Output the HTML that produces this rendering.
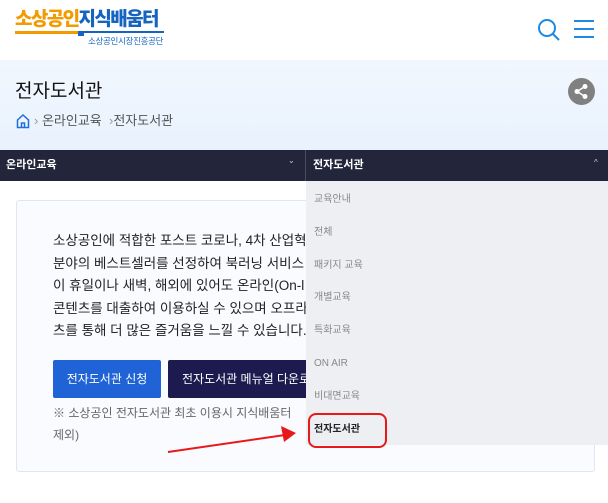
<!DOCTYPE html>
<html><head><meta charset="utf-8"><style>
*{margin:0;padding:0;box-sizing:border-box}
body{width:608px;height:503px;overflow:hidden;background:#fff;font-family:"Liberation Sans","Noto Sans CJK KR",sans-serif;position:relative}
.a{position:absolute}
</style></head><body>
<div class="a" style="left:15px;top:9px;font-size:19px;font-weight:900;letter-spacing:-1.6px;line-height:22px"><span style="color:#f39a00">소상공인</span><span style="color:#1565c0">지식배움터</span></div>
<div class="a" style="left:15px;top:31px;width:66px;height:3px;background:#f39a00"></div>
<div class="a" style="left:80px;top:31px;width:84px;height:2px;background:#1565c0"></div>
<div class="a" style="left:78px;top:31px;width:6px;height:5px;background:#1565c0"></div>
<div class="a" style="left:88px;top:36px;font-size:8.5px;color:#1565c0;line-height:11px;letter-spacing:-0.3px">소상공인시장진흥공단</div>
<svg class="a" style="left:537px;top:18px" width="24" height="24"><circle cx="10" cy="10" r="8" fill="none" stroke="#1e88e5" stroke-width="2"/><line x1="16" y1="16" x2="22" y2="22" stroke="#1e88e5" stroke-width="2"/></svg>
<svg class="a" style="left:573px;top:19px" width="22" height="20"><path d="M1 2H21M1 10H21M1 18H21" stroke="#1e88e5" stroke-width="2"/></svg>
<div class="a" style="left:0;top:60px;width:608px;height:90px;background:linear-gradient(#f1f7fe,#e9f2fd)"></div>
<div class="a" style="left:15px;top:80px;font-size:19px;color:#111;line-height:24px">전자도서관</div>
<div class="a" style="left:568px;top:78px;width:27px;height:27px;border-radius:50%;background:#808080"></div>
<svg class="a" style="left:568px;top:78px" width="27" height="27"><circle cx="17" cy="8.5" r="2.5" fill="#fff"/><circle cx="9" cy="13.5" r="2.5" fill="#fff"/><circle cx="17" cy="18.5" r="2.5" fill="#fff"/><path d="M17 8.5L9 13.5L17 18.5" stroke="#fff" stroke-width="1.5" fill="none"/></svg>
<svg class="a" style="left:16px;top:113px" width="14" height="16"><path d="M1.5 7L7 2L12.5 7V14.5H1.5Z M5.5 14.5V10H8.5V14.5" fill="none" stroke="#1e6fd9" stroke-width="1.5"/></svg>
<div class="a" style="left:34px;top:112px;font-size:13px;color:#555;line-height:18px"><span style="color:#999">›</span> 온라인교육 &nbsp;<span style="color:#999">›</span>전자도서관</div>
<div class="a" style="left:0;top:150px;width:608px;height:31px;background:#23263a"></div>
<div class="a" style="left:305px;top:150px;width:1px;height:31px;background:#4a4d60"></div>
<div class="a" style="left:6px;top:157px;font-size:11px;color:#fff;font-weight:bold;line-height:16px">온라인교육</div>
<div class="a" style="left:288px;top:156px;font-size:8px;color:#ccc">⌄</div>
<div class="a" style="left:313px;top:157px;font-size:11px;color:#fff;font-weight:bold;line-height:16px">전자도서관</div>
<div class="a" style="left:594px;top:158px;font-size:8px;color:#ccc">^</div>
<div class="a" style="left:16px;top:200px;width:579px;height:272px;border:1px solid #dfe6f5;border-radius:3px;background:#f9fbff"></div>
<div class="a" style="left:53px;top:230px;width:260px;font-size:13.5px;color:#222;line-height:22.5px;white-space:nowrap;overflow:hidden">소상공인에 적합한 포스트 코로나, 4차 산업혁<br>분야의 베스트셀러를 선정하여 북러닝 서비스<br>이 휴일이나 새벽, 해외에 있어도 온라인(On-l<br>콘텐츠를 대출하여 이용하실 수 있으며 오프라<br>츠를 통해 더 많은 즐거움을 느낄 수 있습니다.</div>
<div class="a" style="left:53px;top:360px;width:108px;height:38px;background:#1f63d6;border-radius:2px;color:#fff;font-size:12px;line-height:38px;text-align:center">전자도서관 신청</div>
<div class="a" style="left:168px;top:360px;width:140px;height:38px;background:#1d1a4f;border-radius:2px;color:#fff;font-size:12px;line-height:38px;padding-left:14px;white-space:nowrap;overflow:hidden">전자도서관 메뉴얼 다운로</div>
<div class="a" style="left:53px;top:402px;width:253px;font-size:12px;color:#666;line-height:22px;white-space:nowrap;overflow:hidden">※ 소상공인 전자도서관 최초 이용시 지식배움터 <br>제외)</div>
<div class="a" style="left:306px;top:181px;width:302px;height:264px;background:#eeeff2"></div>
<div class="a" style="left:314px;top:184px;font-size:10px;color:#888;line-height:32.8px">교육안내<br>전체<br>패키지 교육<br>개별교육<br>특화교육<br>ON AIR<br>비대면교육<br><span style="color:#222;font-weight:bold">전자도서관</span></div>
<div class="a" style="left:308px;top:413px;width:79px;height:35px;border:2px solid #e8191a;border-radius:8px"></div>
<svg class="a" style="left:160px;top:420px" width="145" height="40"><line x1="8" y1="32" x2="125" y2="15" stroke="#e8191a" stroke-width="2"/><path d="M136 13L121 6L124 22Z" fill="#e8191a"/></svg>
</body></html>
